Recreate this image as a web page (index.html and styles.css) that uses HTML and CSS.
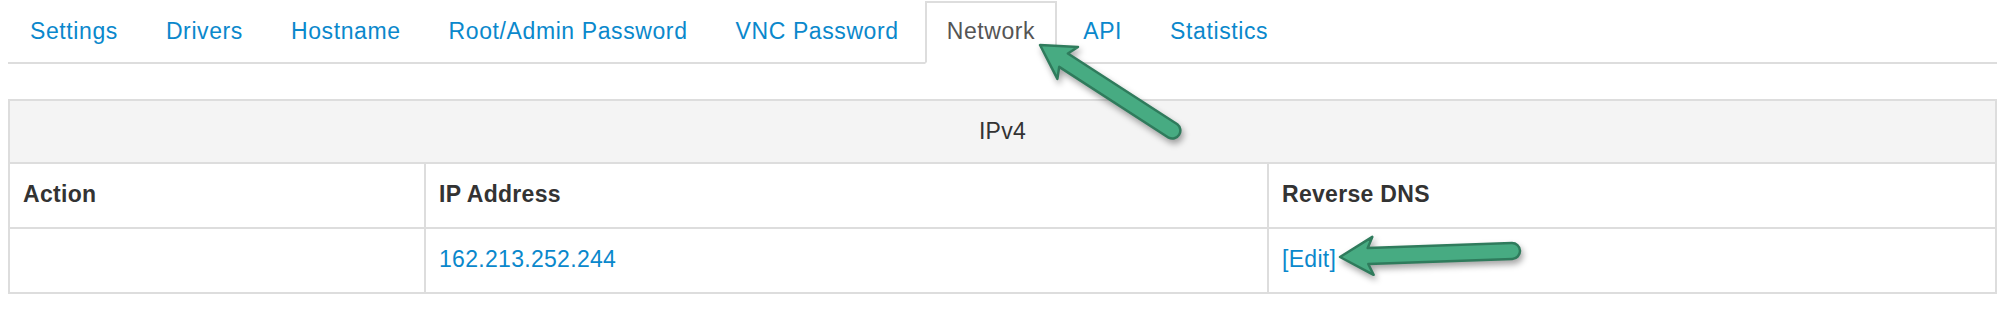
FILE: index.html
```html
<!DOCTYPE html>
<html lang="en">
<head>
<meta charset="utf-8">
<title>Network</title>
<link rel="stylesheet" href="styles.css">
</head>
<body>
<div class="page">
  <ul class="tabs">
    <li class="tab"><a href="#">Settings</a></li>
    <li class="tab"><a href="#">Drivers</a></li>
    <li class="tab"><a href="#">Hostname</a></li>
    <li class="tab"><a href="#">Root/Admin Password</a></li>
    <li class="tab"><a href="#">VNC Password</a></li>
    <li class="tab active"><a href="#">Network</a></li>
    <li class="tab"><a href="#">API</a></li>
    <li class="tab"><a href="#">Statistics</a></li>
  </ul>

  <table class="ip-table">
    <colgroup>
      <col class="col-action">
      <col class="col-ip">
      <col class="col-dns">
    </colgroup>
    <thead>
      <tr class="caption-row"><th colspan="3">IPv4</th></tr>
      <tr class="head-row"><th>Action</th><th>IP Address</th><th>Reverse DNS</th></tr>
    </thead>
    <tbody>
      <tr class="body-row"><td></td><td><a href="#">162.213.252.244</a></td><td><a href="#">[Edit]</a></td></tr>
    </tbody>
  </table>

  <svg class="annotations" width="2008" height="314" viewBox="0 0 2008 314" aria-hidden="true">
    <path class="arrow" d="M1040,45 L1078,47 L1067.9,53.5 L1177.3,124.3 A8,8 0 0 1 1168.7,137.7 L1059.2,66.9 L1057.4,78.9 Z"/>
    <path class="arrow" d="M1340,257 L1372.3,236.9 L1367.7,248 L1511.7,243 A8,8 0 0 1 1512.3,259 L1368.3,264 L1373.6,274.8 Z"/>
  </svg>
</div>
</body>
</html>
```

FILE: styles.css
```css
html, body {
  margin: 0;
  padding: 0;
  background: #ffffff;
}

body {
  font-family: "Liberation Sans", Arial, Helvetica, sans-serif;
  color: #333333;
}

.page {
  position: relative;
  width: 2008px;
  height: 314px;
  padding: 0 11px 0 8px;
  box-sizing: border-box;
}

.tabs {
  list-style: none;
  margin: 0;
  padding: 1px 0 0 0;
  display: flex;
  border-bottom: 2px solid #dddddd;
}

.tab {
  margin: 0 4px -2px 0;
}

.tab a {
  display: block;
  padding: 12px 20px 14px 20px;
  border: 2px solid transparent;
  font-size: 23px;
  line-height: 33px;
  letter-spacing: 0.6px;
  color: #0a88cc;
  text-decoration: none;
}

.tab.active a {
  color: #555555;
  background: #ffffff;
  border-color: #dddddd;
  border-bottom-color: #ffffff;
}

.ip-table {
  margin-top: 35px;
  width: 1989px;
  table-layout: fixed;
  border-collapse: collapse;
  border: 2px solid #dddddd;
  font-size: 23px;
  line-height: 33px;
  letter-spacing: 0.3px;
}

.col-action { width: 416px; }
.col-ip { width: 843px; }
.col-dns { width: 728px; }

.ip-table th,
.ip-table td {
  border: 2px solid #dddddd;
  padding: 14px 13px 16px 13px;
  text-align: left;
  vertical-align: top;
}

.caption-row th {
  background: #f4f4f4;
  font-weight: normal;
  text-align: center;
  padding: 14px 13px 14px 13px;
  color: #333333;
}

.head-row th {
  font-weight: bold;
  color: #333333;
}

.body-row td a {
  color: #0a88cc;
  text-decoration: none;
}

.annotations {
  position: absolute;
  top: 0;
  left: 0;
  pointer-events: none;
  overflow: visible;
}

.arrow {
  fill: #47ab82;
  stroke: #2f7b5c;
  stroke-width: 2.5;
  stroke-linejoin: round;
  filter: drop-shadow(2px 4px 3px rgba(0, 0, 0, 0.35));
}
```
